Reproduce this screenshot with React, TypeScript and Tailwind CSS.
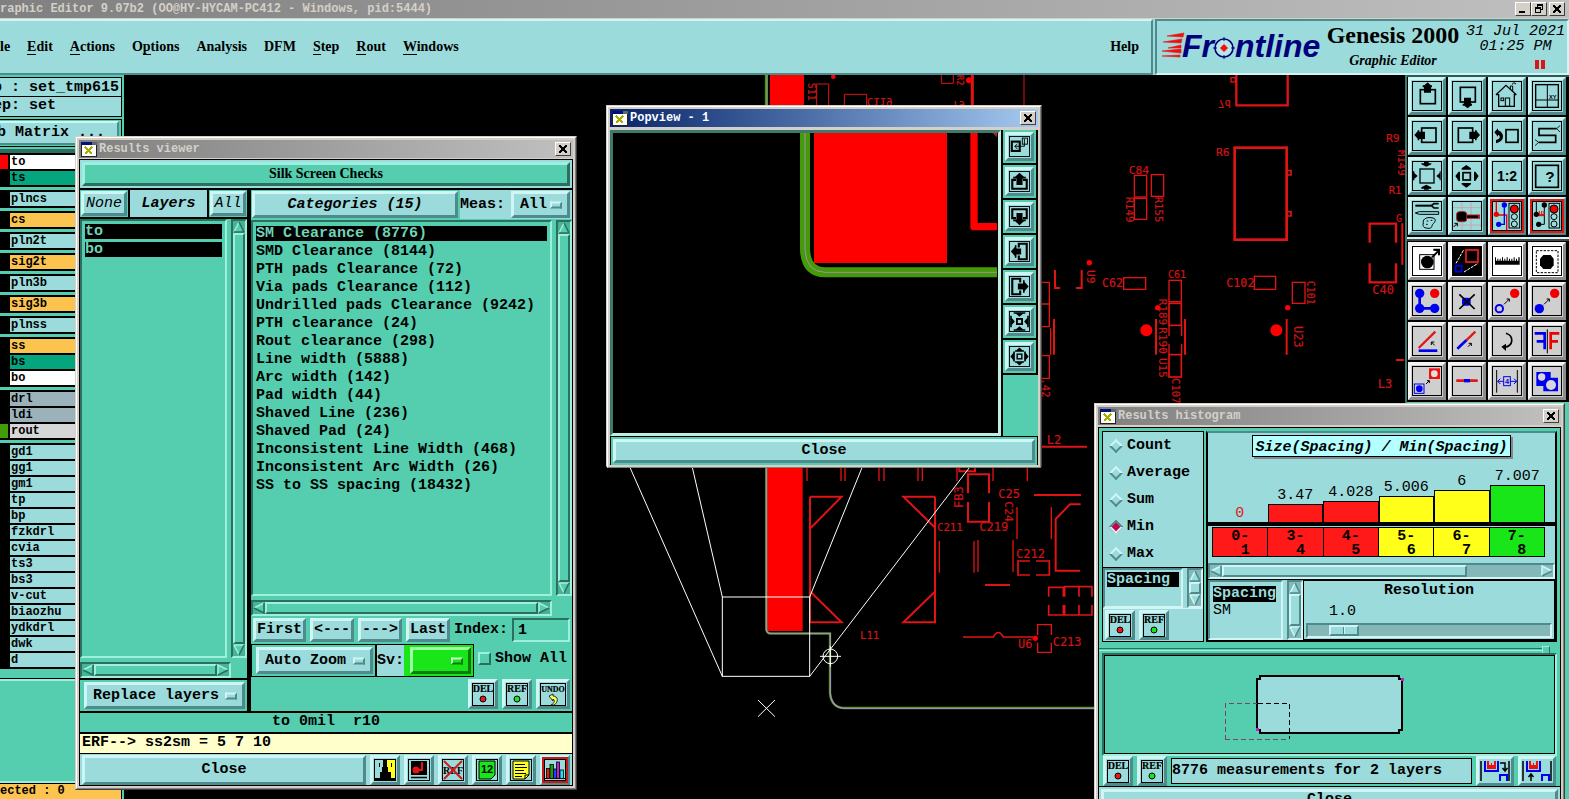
import React from "react";

/* ---------- shared class strings ---------- */
const mono = "font-['Liberation_Mono',monospace]";
const serif = "font-['Liberation_Serif',serif]";
const text15 = `${mono} text-[15px] leading-[18px] text-black`;
const raised = "border-t-[#cff6f4] border-l-[#cff6f4] border-b-[#4f8a8c] border-r-[#4f8a8c]";
const raisedTeal = "border-t-[#9cf0dc] border-l-[#9cf0dc] border-b-[#2b705f] border-r-[#2b705f]";
const sunkenTeal = "border-t-[#2b705f] border-l-[#2b705f] border-b-[#9cf0dc] border-r-[#9cf0dc]";
const sunken = "border-t-[#4f8a8c] border-l-[#4f8a8c] border-b-[#cff6f4] border-r-[#cff6f4]";
const cyan = "bg-[#9bdbdb]";
const teal = "bg-[#54ceae]";

/* ---------- small widgets ---------- */
function WinButton({ kind }: { kind: "min" | "restore" | "close" }) {
  return (
    <button
      type="button"
      aria-label={kind}
      className="flex h-[14px] w-4 shrink-0 items-center justify-center border border-t-white border-l-white border-r-[#404040] border-b-[#404040] bg-[#d4d0c8]"
    >
      <svg width="10" height="10" viewBox="0 0 10 10" fill="none" stroke="#000" shapeRendering="crispEdges">
        {kind === "close" && <path d="M1 1.5L8 8.5M2 1.5L9 8.5M8 1.5L1 8.5M9 1.5L2 8.5" strokeWidth="1" />}
        {kind === "min" && <path d="M1 8h6" strokeWidth="2" />}
        {kind === "restore" && <path d="M3.5 4V1M3 1h6M8.5 1v5M9 5.5H7M1.5 4v5M1 8.5h6M6.5 9V4M1 4h6" strokeWidth="1.4" />}
      </svg>
    </button>
  );
}

function TitleBar({ title, active = false }: { title: string; active?: boolean }) {
  return (
    <div
      className={`flex h-[18px] items-center gap-0.5 pl-0.5 pr-0.5 ${
        active ? "bg-linear-to-r from-[#0a246a] to-[#a6caf0] text-white" : "bg-linear-to-r from-[#808080] to-[#c0c0c0] text-[#d4d0c8]"
      }`}
    >
      <svg width="16" height="15" viewBox="0 0 16 15" shapeRendering="crispEdges">
        <rect width="16" height="15" fill="#222" />
        <rect x="0" y="0" width="11" height="3" fill="#001080" />
        <rect x="11" y="0" width="5" height="3" fill="#666" />
        <rect x="1" y="3" width="14" height="11" fill="#fff" />
        <path d="M4 5l7 7" stroke="#b0a800" strokeWidth="2.5" />
        <path d="M11 5l-7 7" stroke="#a0b000" strokeWidth="1.5" />
      </svg>
      <span className={`${mono} flex-1 text-xs leading-4 font-bold`}>{title}</span>
      <WinButton kind="close" />
    </div>
  );
}

function Frame({ className, children }: { className: string; children: React.ReactNode }) {
  return (
    <section className={`absolute flex flex-col border border-t-[#d4d0c8] border-l-[#d4d0c8] border-b-[#404040] border-r-[#404040] ${className}`}>
      <div className="flex flex-1 flex-col border border-t-white border-l-white border-b-[#808080] border-r-[#808080] bg-[#d4d0c8] p-0.5">{children}</div>
    </section>
  );
}

type Dir = "up" | "down" | "left" | "right";
const triPath: Record<Dir, string[]> = {
  up: ["M6 1L1 11", "M6 1L11 11M1 11H11"],
  down: ["M1 1H11M1 1L6 11", "M11 1L6 11"],
  left: ["M11 1L1 6", "M1 6L11 11V1"],
  right: ["M1 11V1L11 6", "M11 6L1 11"],
};
const triFill: Record<Dir, string> = {
  up: "M6 1L1 11H11Z",
  down: "M1 1H11L6 11Z",
  left: "M11 1L1 6L11 11Z",
  right: "M1 1L11 6L1 11Z",
};
function Tri({ dir, pale }: { dir: Dir; pale: boolean }) {
  const [lt, dk] = triPath[dir];
  return (
    <svg width="12" height="12" viewBox="0 0 12 12" className="shrink-0" fill="none">
      <path d={triFill[dir]} fill={pale ? "#9bdbdb" : "#54ceae"} />
      <path d={lt} stroke={pale ? "#cff6f4" : "#9cf0dc"} strokeWidth="1.6" />
      <path d={dk} stroke={pale ? "#4f8a8c" : "#2b705f"} strokeWidth="1.6" />
    </svg>
  );
}

function ScrollBar({ vertical = false, pale = false, className = "", fill = true }: { vertical?: boolean; pale?: boolean; className?: string; fill?: boolean }) {
  return (
    <div
      className={`flex items-center border-2 ${pale ? `${sunken} bg-[#84b8b8]` : `${sunkenTeal} bg-[#48b294]`} ${
        vertical ? "w-4 flex-col" : "h-4"
      } ${className}`}
    >
      <Tri dir={vertical ? "up" : "left"} pale={pale} />
      <div
        className={`${pale ? `${raised} ${cyan}` : `${raisedTeal} ${teal}`} border-2 ${vertical ? "w-full" : "h-full"} ${fill ? "flex-1" : "mr-auto w-[245px]"}`}
      />
      <Tri dir={vertical ? "down" : "right"} pale={pale} />
    </div>
  );
}

function Drop({ label, value, className, green = false }: { label: string; value: string; className: string; green?: boolean }) {
  return (
    <div className={`relative ${className}`}>
      <select
        aria-label={label}
        className={`${text15} h-full w-full appearance-none border-[3px] pl-1.5 font-bold ${
          green ? "border-t-[#a0ffa0] border-l-[#a0ffa0] border-b-[#0f7a0f] border-r-[#0f7a0f] bg-[#19e619]" : `${raised} ${cyan}`
        }`}
      >
        <option>{value}</option>
      </select>
      <span
        className={`pointer-events-none absolute top-1/2 right-2 h-[7px] w-3 -translate-y-1/2 border-2 ${
          green ? "border-t-[#c0ffc0] border-l-[#c0ffc0] border-b-[#0f7a0f] border-r-[#0f7a0f]" : raised
        }`}
      />
    </div>
  );
}

function TextButton({ children, className = "" }: { children: React.ReactNode; className?: string }) {
  return (
    <button type="button" className={`${text15} flex items-center justify-center border-[3px] font-bold ${raised} ${cyan} ${className}`}>
      {children}
    </button>
  );
}

/* word-over-dot glyphs used for delete / reference / undo */
function WordIcon({ word }: { word: "DEL" | "REF" | "UNDO" }) {
  const w = word === "UNDO" ? 26 : 22;
  return (
    <svg width={w} height="23" viewBox={`0 0 ${w} 23`} className="shrink-0">
      <rect x=".5" y=".5" width={w - 1} height="22" fill="none" stroke="#000" />
      <text x={w / 2} y="9" textAnchor="middle" fontSize={word === "UNDO" ? 8 : 10} fontFamily="Liberation Serif, serif" stroke="#000" strokeWidth=".2">
        {word}
      </text>
      {word === "UNDO" ? (
        <path d="M9 13l4-2v2c5 0 6 6 1 9h-3c4-2 4-5 2-6v2z" fill="#ffff60" stroke="#000" strokeWidth=".8" />
      ) : (
        <circle cx={w / 2} cy="16" r="3" fill={word === "DEL" ? "#e81818" : "#19e619"} stroke="#000" />
      )}
    </svg>
  );
}
function IconButton({ label, children, className = "" }: { label: string; children: React.ReactNode; className?: string }) {
  return (
    <button type="button" aria-label={label} className={`flex h-[30px] items-center justify-center overflow-hidden border-[3px] ${raised} ${cyan} ${className}`}>
      {children}
    </button>
  );
}

/* ---------- tool palette icons, drawn on a 90-unit grid ---------- */
const K = "#000";
const B = "#0000f0";
const R = "#f00000";
const A = {
  up: "M47 4L56 13H60V19H57V35H36V19H32V13H37Z",
  down: "M47 82L56 74H60V68H57V50H36V68H32V74H37Z",
  left: "M7 42L17 31V28H22V32H39V54H22V58H17V53Z",
  right: "M84 42L74 31V28H69V32H52V54H69V58H74V53Z",
};
const smallArrow = "M36 55L52 39M52 39h-8M52 39v8";

const views: { name: string; art: React.ReactNode }[] = [
  { name: "Pan up", art: <><rect x="25" y="26" width="45" height="42" fill="none" stroke={K} strokeWidth="5" /><path d={A.up} /></> },
  { name: "Pan down", art: <><rect x="25" y="19" width="45" height="44" fill="none" stroke={K} strokeWidth="5" /><path d={A.down} /></> },
  { name: "Home", art: <g fill="none" stroke={K} strokeWidth="3"><path d="M12 41L42 13L73 41M12 41H20V76H67V41H73" strokeWidth="4" /><rect x="40" y="51" width="13" height="25" /><rect x="27" y="51" width="8" height="8" /><path d="M55 24V15H62V30M60 10L66 5L72 9" /></g> },
  { name: "Coordinates", art: <g fill="none" stroke={K}><rect x="11" y="11" width="68" height="68" strokeWidth="4" /><path d="M46 10V80M10 57H80" strokeWidth="3" /><text x="51" y="53" fontSize="17" fontWeight="700" fontFamily="Liberation Sans, sans-serif" fill={K} stroke="none">XY</text></g> },
  { name: "Pan left", art: <><rect x="29" y="21" width="43" height="43" fill="none" stroke={K} strokeWidth="5" /><path d={A.left} /></> },
  { name: "Pan right", art: <><rect x="19" y="21" width="43" height="43" fill="none" stroke={K} strokeWidth="5" /><path d={A.right} /></> },
  { name: "Previous view", art: <><rect x="42" y="26" width="36" height="38" fill="none" stroke={K} strokeWidth="5" /><path d="M7 34L18 22V28C38 34 40 62 12 67V57C26 54 26 44 18 41V47Z" /></> },
  { name: "Serpentine", art: <g fill="none" stroke={K} strokeWidth="5"><path d="M74 23H21V43H71V64H20" /><path d="M74 23L84 14M74 23L84 33M20 64L9 56M20 64L9 74" strokeWidth="2.5" /></g> },
  { name: "Zoom in", art: <><rect x="24" y="24" width="42" height="42" fill="none" stroke={K} strokeWidth="4" /><path d="M28 7H36V3H50V7H58V10L43 17L28 10ZM28 83H36V86H50V83H58V79L43 71L28 79ZM3 31V58H7V53L17 45L7 36V31ZM86 31V58H83V53L73 45L83 36V31Z" /></> },
  { name: "Zoom out", art: <><rect x="33" y="35" width="22" height="22" fill="none" stroke={K} strokeWidth="5" /><path d="M43 12L57 22V26H29V22ZM43 80L57 70V66H29V70ZM10 45L20 32H24V60H20ZM80 45L70 32H66V60H70Z" /></> },
  { name: "Scale", art: <text x="45" y="59" textAnchor="middle" fontSize="42" fontWeight="700" fontFamily="Liberation Sans, sans-serif">1:2</text> },
  { name: "Help", art: <><rect x="11" y="13" width="68" height="66" fill="none" stroke={K} strokeWidth="5" /><text x="54" y="64" textAnchor="middle" fontSize="46" fontWeight="700" fontFamily="Liberation Sans, sans-serif">?</text></> },
  { name: "Setup", art: <g fill="none" stroke={K} strokeWidth="3"><path d="M10 14H58" strokeWidth="6" /><path d="M80 8H66L58 14L66 21H80" strokeWidth="5" /><path d="M10 36L22 32H80V40H22Z" /><path d="M34 66C30 52 50 46 66 52C74 56 68 64 62 70C58 76 62 80 52 82C38 82 30 78 34 66Z" /><path d="M44 60h5M56 58h5M42 70h5" /></g> },
  { name: "Select feature", art: <g><path d="M30 3V87M57 3V87M3 20H87M3 72H87" stroke="#c8a8a8" strokeWidth="3" /><path d="M30 47H84" stroke="#b02020" strokeWidth="13" /><path d="M30 47H78" stroke={K} strokeWidth="7" /><rect x="14" y="32" width="30" height="30" rx="8" fill={K} stroke="#b02020" strokeWidth="3" /><path d="M5 78L16 67M16 67h-9M16 67v9" stroke={K} strokeWidth="3" fill="none" /></g> },
  { name: "Net view on", art: <g fill="none" strokeWidth="4"><path d="M13 3V42H44V87" stroke={R} /><path d="M37 14V70H20" stroke={B} /><circle cx="37" cy="12" r="8" fill={B} /><circle cx="20" cy="70" r="8" fill={B} /><circle cx="13" cy="40" r="8" fill={R} /><rect x="51" y="7" width="32" height="74" stroke={K} strokeWidth="3" /><circle cx="67" cy="24" r="12" fill={R} stroke={K} strokeWidth="3" /><circle cx="67" cy="47" r="9" stroke={K} strokeWidth="3" /><circle cx="67" cy="69" r="9" stroke={K} strokeWidth="3" /></g> },
  { name: "Net view off", art: <g fill="none" strokeWidth="4"><path d="M13 3V42H37M37 14V70H20" stroke={K} strokeWidth="3" /><path d="M20 42H38M22 30V46M29 30V46M36 30V46" stroke={R} strokeWidth="3" /><circle cx="37" cy="12" r="8" fill={K} /><circle cx="20" cy="70" r="8" fill={K} /><circle cx="13" cy="40" r="8" fill={K} /><rect x="51" y="7" width="32" height="74" stroke={K} strokeWidth="3" /><circle cx="66" cy="24" r="12" fill={R} stroke={K} strokeWidth="3" /><circle cx="66" cy="47" r="9" stroke={K} strokeWidth="3" /><circle cx="66" cy="69" r="9" stroke={K} strokeWidth="3" /></g> },
];

const edits: { name: string; tone: string; art: React.ReactNode }[] = [
  { name: "Select", tone: "white", art: <g><rect x="23" y="26" width="43" height="44" fill="none" stroke={K} strokeWidth="3" /><circle cx="46" cy="48" r="19" /><path d="M60 34L78 16" stroke={K} strokeWidth="6" /><path d="M64 8H84V28H78V16L64 14Z" /></g> },
  { name: "Area", tone: "white", art: <g fill="none"><rect width="90" height="90" fill={K} /><rect x="42" y="12" width="36" height="36" stroke="#d01818" strokeWidth="6" /><rect x="11" y="59" width="18" height="18" stroke={B} strokeWidth="5" /><path d="M12 52L36 10M36 78L78 52" stroke="#fff" strokeWidth="3" strokeDasharray="9 3" /></g> },
  { name: "Measure", tone: "white", art: <path d="M9 56V34H12V44H16V38H19V44H23V38H26V44H30V34H33V44H37V38H40V44H44V34H47V44H51V38H54V44H58V38H61V44H65V34H68V44H72V38H75V44H79V34H83V56Z" /> },
  { name: "Window select", tone: "white", art: <g><rect x="13" y="14" width="65" height="66" fill="none" stroke={K} strokeWidth="3" strokeDasharray="7 4" /><path d="M34 27H56L65 38V58L56 69H34L24 58V38Z" /></g> },
  { name: "Connect", tone: "gray", art: <g><path d="M23 22V67H68" fill="none" stroke={B} strokeWidth="8" /><circle cx="23" cy="22" r="14" fill={B} /><circle cx="23" cy="67" r="14" fill={B} /><circle cx="68" cy="67" r="14" fill={B} /><circle cx="68" cy="22" r="14" fill={R} /></g> },
  { name: "Delete", tone: "gray", art: <g><rect x="30" y="35" width="26" height="24" rx="8" fill={B} /><path d="M22 25L68 69M68 25L22 69" stroke={K} strokeWidth="5" /></g> },
  { name: "Copy", tone: "gray", art: <g fill="none"><circle cx="22" cy="68" r="11" stroke={B} strokeWidth="6" /><circle cx="68" cy="22" r="14" fill={R} /><path d={smallArrow} stroke={K} strokeWidth="3" /></g> },
  { name: "Move", tone: "gray", art: <g fill="none"><circle cx="22" cy="68" r="14" fill={B} /><circle cx="68" cy="22" r="14" fill={R} /><path d={smallArrow} stroke={K} strokeWidth="3" /></g> },
  { name: "Rotate line", tone: "gray", art: <g fill="none"><path d="M20 66L70 17" stroke="#e01818" strokeWidth="7" /><path d="M20 74H76" stroke={B} strokeWidth="8" /><path d="M68 58L58 48M58 48h9M58 48v9" stroke={K} strokeWidth="3" /></g> },
  { name: "Stretch line", tone: "gray", art: <g fill="none"><path d="M42 44L70 17" stroke="#e01818" strokeWidth="7" /><path d="M16 68L43 43" stroke={B} strokeWidth="8" /><path d="M48 62L58 52M58 52h-8M58 52v8" stroke={K} strokeWidth="3" /></g> },
  { name: "Rotate", tone: "gray", art: <g fill="none"><path d="M42 22C66 30 66 60 36 64" stroke={K} strokeWidth="5" /><path d="M28 62L42 53V75Z" fill={K} /></g> },
  { name: "Mirror", tone: "gray", art: <g fill="none" strokeWidth="7"><path d="M8 22H38V70M38 46H14" stroke={B} strokeWidth="8" /><path d="M82 22H56V70M56 46H78" stroke={R} strokeWidth="8" /><path d="M46 10V82" stroke={K} strokeWidth="3" /></g> },
  { name: "Substitute", tone: "gray", art: <g fill="none"><rect x="7" y="54" width="29" height="28" stroke={B} strokeWidth="3" /><circle cx="22" cy="68" r="10" fill={B} /><rect x="51" y="7" width="33" height="32" fill="#f01010" /><circle cx="67" cy="23" r="10" fill="#e0e0e0" /><path d="M42 54L52 44M52 44h-7M52 44v7" stroke={K} strokeWidth="3" /></g> },
  { name: "Break line", tone: "gray", art: <g><path d="M16 44H74" stroke="#e01818" strokeWidth="8" strokeLinecap="round" /><path d="M36 44H54" stroke={B} strokeWidth="10" /></g> },
  { name: "Spacing", tone: "gray", art: <g fill="none" stroke={B} strokeWidth="3"><path d="M14 12V80M76 12V80" stroke={K} /><rect x="35" y="32" width="20" height="27" /><path d="M17 46H34M17 46l8-8M17 46l8 8M56 46H74M74 46l-8-8M74 46l-8 8" /><text x="45" y="54" textAnchor="middle" fontSize="22" fontWeight="700" fontFamily="Liberation Sans, sans-serif" fill={B} stroke="none">4</text></g> },
  { name: "Surface", tone: "gray", art: <g><path d="M13 18H56V35H78V76H34V60H13Z" fill={B} /><circle cx="29" cy="33" r="11" fill="#d8d8d8" /><circle cx="57" cy="57" r="15" fill="#d8d8d8" /></g> },
];

function ToolArt({ children }: { children: React.ReactNode }) {
  return (
    <svg width="30" height="30" viewBox="0 0 90 90">
      {children}
      <rect x="1.5" y="1.5" width="87" height="87" fill="none" stroke="#000" strokeWidth="3" />
    </svg>
  );
}

function Palette() {
  return (
    <aside className="relative z-0 flex w-[164px] shrink-0 flex-col border-l-2 border-l-[#3c7a70] bg-[#54ceae]">
      <div className="grid grid-cols-[repeat(4,38px)] gap-0.5 border-t-2 border-b-2 border-t-[#2b5a55] border-b-[#cff6f4] bg-black pb-0.5 pl-px">
        {views.map((v, i) => (
          <button
            key={v.name}
            type="button"
            aria-label={v.name}
            className={`flex h-[38px] w-[38px] items-center justify-center border-[3px] ${cyan} ${raised} ${i > 13 ? "outline-2 -outline-offset-4 outline-[#e01818]" : ""}`}
          >
            <ToolArt>{v.art}</ToolArt>
          </button>
        ))}
      </div>
      <div className="grid grid-cols-[repeat(4,38px)] gap-0.5 border-t-2 border-t-[#444] bg-black pt-px pb-0.5 pl-px">
        {edits.map((v) => (
          <button
            key={v.name}
            type="button"
            aria-label={v.name}
            className={`flex h-[38px] w-[38px] items-center justify-center border-[3px] border-t-[#f4f4f4] border-l-[#f4f4f4] border-b-[#8c8c8c] border-r-[#8c8c8c] ${
              v.tone === "white" ? "bg-white" : "bg-[#cfcfcf]"
            }`}
          >
            <ToolArt>{v.art}</ToolArt>
          </button>
        ))}
      </div>
    </aside>
  );
}

/* ---------- header ---------- */
const menus: [string, string, string][] = [
  ["", "", "le"],
  ["", "E", "dit"],
  ["", "A", "ctions"],
  ["O", "p", "tions"],
  ["", "", "Analysis"],
  ["", "", "DFM"],
  ["", "S", "tep"],
  ["", "R", "out"],
  ["", "W", "indows"],
];

function Header() {
  return (
    <header className="relative">
      <div className="flex h-[18px] items-center bg-linear-to-r from-[#808080] to-[#c0c0c0] pr-1 text-[#d4d0c8]">
        <span className={`${mono} flex-1 overflow-hidden text-xs leading-4 font-bold whitespace-nowrap`}>
          raphic Editor 9.07b2 (OO@HY-HYCAM-PC412 - Windows, pid:5444)
        </span>
        <WinButton kind="min" />
        <WinButton kind="restore" />
        <span className="w-0.5" />
        <WinButton kind="close" />
      </div>
      <div className="h-px bg-[#d4d0c8]" />
      <div className={`flex h-14 ${cyan}`}>
        <nav className={`${serif} flex flex-1 items-center gap-[17px] border-t-2 border-r-2 border-b-2 border-t-[#cff6f4] border-r-[#4f8a8c] border-b-[#4f8a8c] pr-3 text-sm leading-4 font-bold text-black`}>
          {menus.map(([a, u, b]) => (
            <button key={a + u + b} type="button">
              {a}
              <span className={u ? "border-b border-black" : ""}>{u}</span>
              {b}
            </button>
          ))}
          <button type="button" className="ml-auto">Help</button>
        </nav>
        <div className="ml-0.5 flex w-[414px] border-2 border-t-[#4f8a8c] border-l-[#4f8a8c] border-r-[#cff6f4] border-b-[#cff6f4]">
          <svg width="165" height="50" viewBox="1157 22 165 50" role="img" aria-label="Frontline" className="shrink-0">
            <path d="M1184 34L1167 37L1183 38ZM1182 40L1163 43L1181 44ZM1181 46L1168 49L1181 49ZM1181 50L1162 52L1181 54ZM1180 56L1162 57L1180 58Z" fill="#f01010" stroke="#f01010" strokeWidth=".6" />
            <g fill="#00007c" fontFamily="Liberation Sans, sans-serif" fontSize="32" fontWeight="700" fontStyle="italic">
              <text x="1182" y="58">Fr</text>
              <text x="1235" y="58">ntline</text>
            </g>
            <circle cx="1224" cy="49" r="9" fill="#b8e6e6" stroke="#00007c" strokeWidth="1.6" />
            <path d="M1224 45L1228 49L1224 53L1220 49Z" fill="#f01010" />
            <path d="M1224 38V42M1224 56V60M1213 49H1217M1231 49H1235" stroke="#00007c" />
          </svg>
          <div className={`${serif} flex w-[142px] shrink-0 flex-col items-center text-black`}>
            <span className="text-2xl leading-7 font-bold whitespace-nowrap">Genesis 2000</span>
            <span className="mt-1 text-sm leading-4 font-bold italic">Graphic Editor</span>
          </div>
          <div className={`${mono} flex flex-1 flex-col text-center text-[15px] leading-[15px] text-black italic`}>
            <span className="mt-[3px] whitespace-nowrap">31 Jul 2021</span>
            <span>01:25 PM</span>
            <span className="mt-1.5 mr-[22px] flex justify-center gap-0.5 self-end">
              <i className="h-[9px] w-1 bg-[#d81818]" />
              <i className="h-[9px] w-1 bg-[#d81818]" />
            </span>
          </div>
        </div>
      </div>
    </header>
  );
}

/* ---------- layer list ---------- */
type Layer = [string, string, string?];
const W = "bg-white";
const G = "bg-[#05a57e]";
const O = "bg-[#fcc44f]";
const C = "bg-[#9bdbdb]";
const S = "bg-[#9bb2bb]";
const groups: Layer[][] = [
  [["to", W, "bg-[#ff0000]"], ["ts", G]],
  [["plncs", C]],
  [["cs", O]],
  [["pln2t", C]],
  [["sig2t", O]],
  [["pln3b", C]],
  [["sig3b", O]],
  [["plnss", C]],
  [["ss", O], ["bs", G], ["bo", W]],
  [["drl", S], ["ldi", S], ["rout", "bg-[#d6d6d6]", "bg-[#449b08]"]],
  ["gd1", "gg1", "gm1", "tp", "bp", "fzkdrl", "cvia", "ts3", "bs3", "v-cut", "biaozhu", "ydkdrl", "dwk", "d"].map((n) => [n, C] as Layer),
];

function LayerPanel() {
  return (
    <aside className={`relative z-0 flex w-[124px] shrink-0 flex-col overflow-hidden ${teal} pt-0.5 pr-0.5 ${text15} font-bold`}>
      <div className={`h-5 border-y border-r border-black -indent-[7px] leading-[19px] whitespace-nowrap ${cyan}`}>b : set_tmp615</div>
      <div className={`h-5 border-b border-r border-black -indent-[7px] ${cyan}`}>ep: set</div>
      <div className="mt-0.5 border-y border-r border-black pr-0.5 py-px">
        <button type="button" className={`h-6 w-full border-y-2 border-r-2 text-left -indent-[3px] font-bold ${raised} ${cyan}`}>b Matrix ...</button>
      </div>
      <div className="mt-0.5 h-1 bg-[#2b705f]" />
      <div className="flex flex-col gap-[3px]">
        {groups.map((g) => (
          <ul key={g[0][0]} className="bg-black pt-0.5">
            {g.map(([name, bg, chip]) => (
              <li key={name} className="mb-0.5 flex h-[14px] gap-0.5">
                <span className={`w-2 ${chip ?? "bg-black"}`} />
                <button type="button" className={`flex-1 pl-px text-left text-xs leading-[14px] font-bold ${bg}`}>{name}</button>
              </li>
            ))}
          </ul>
        ))}
      </div>
      <div className="mt-[9px] h-[106px] border-y border-black">
        <div className="h-full border-y-2 border-t-[#9cf0dc] border-b-[#9cf0dc]" />
      </div>
      <div className="flex-1 border-r border-black bg-[#fcc44f] text-xs leading-[15px]">ected : 0</div>
    </aside>
  );
}

/* ---------- board artwork ---------- */
function Lbl({ x, y, r = 0, s = 27, flip = false, children }: { x: number; y: number; r?: number; s?: number; flip?: boolean; children: string }) {
  return (
    <text
      transform={`translate(${x} ${y}) rotate(${r})${flip ? " scale(1 -1)" : ""}`}
      fontSize={s}
      fontFamily="DejaVu Sans Mono, monospace"
      fill="#d01414"
      stroke="#d01414"
      strokeWidth=".6"
    >
      {children}
    </text>
  );
}

function Board() {
  return (
    <svg className="absolute inset-0 h-full w-full" aria-label="Board layout">
      <g transform="translate(600 70) scale(.33333)" fill="none" stroke="#e01414" strokeWidth="4">
        <path d="M499 10V120" stroke="#449b08" strokeWidth="9" />
        <path d="M501 10V120" stroke="#a78ab0" strokeWidth="3" />
        <rect x="510" y="10" width="102" height="120" fill="#ff0000" stroke="none" />
        <path d="M650 110V42H686V110M733 110V73H800V110M1024 15V40H1060V15M1272 15V110" strokeWidth="3" />
        <path d="M1117 15V110" strokeWidth="9" />
        <circle cx="1107" cy="31" r="9" fill="#ff0000" stroke="none" />
        <circle cx="700" cy="20" r="7" fill="#ff0000" stroke="none" />
        <Lbl x={800} y={84} s={32} flip>C119</Lbl>
        <Lbl x={624} y={38} r={90} s={30}>S11</Lbl>
        <Lbl x={1070} y={15} r={90} s={26}>R2</Lbl>
        <Lbl x={1056} y={92} s={32} flip>T9</Lbl>
      </g>
      <g transform="translate(1030 70) scale(.33333)" fill="none" stroke="#e01414" strokeWidth="4">
        <path d="M619 15V106H773V15" strokeWidth="7" />
        <rect x="603" y="23" width="13" height="13" />
        <rect x="614" y="233" width="156" height="276" strokeWidth="8" />
        <path d="M772 302H783V315H772M772 425H783V438H772" strokeWidth="5" />
        <rect x="313" y="316" width="37" height="65" /><rect x="364" y="314" width="37" height="65" /><rect x="313" y="385" width="37" height="63" />
        <path d="M75 600V654H90M155 600V654H138" strokeWidth="6" />
        <rect x="281" y="623" width="66" height="35" /><rect x="673" y="619" width="64" height="39" /><rect x="787" y="637" width="38" height="63" />
        <rect x="417" y="631" width="37" height="64" /><rect x="417" y="700" width="37" height="66" strokeWidth="5" />
        <path d="M417 766V798M417 822V854M455 766V798M455 822V854" /><rect x="417" y="854" width="37" height="67" strokeWidth="5" />
        <path d="M378 747V854M465 747V854M770 747V854M72 747V854" strokeWidth="6" />
        <path d="M30 637H58V702H30M58 702V770H30M62 775V855M30 857H58V925H30" />
        <circle cx="178" cy="578" r="8" fill="#ff0000" stroke="none" /><circle cx="383" cy="713" r="8" fill="#ff0000" stroke="none" /><circle cx="773" cy="713" r="8" fill="#ff0000" stroke="none" />
        <circle cx="349" cy="781" r="18" fill="#ff0000" stroke="none" /><circle cx="739" cy="781" r="18" fill="#ff0000" stroke="none" />
        <path d="M1019 518V461H1098V518M1019 580V637H1098V580" strokeWidth="7" />
        <path d="M1117 460V584M1098 870H1122" strokeWidth="6" />
        <Lbl x={564} y={91} s={32} flip>7d</Lbl>
        <Lbl x={558} y={257} s={34}>R6</Lbl><Lbl x={296} y={312} s={34}>C84</Lbl>
        <Lbl x={288} y={380} r={90} s={32}>R149</Lbl><Lbl x={376} y={380} r={90} s={32}>R155</Lbl>
        <Lbl x={216} y={652} s={35}>C62</Lbl><Lbl x={414} y={625} s={30}>C61</Lbl><Lbl x={589} y={651} s={35}>C102</Lbl>
        <Lbl x={832} y={632} r={90} s={30}>C101</Lbl><Lbl x={172} y={600} r={90} s={34}>U9</Lbl>
        <Lbl x={388} y={686} r={90} s={33}>R189</Lbl><Lbl x={388} y={772} r={90} s={33}>R190</Lbl><Lbl x={388} y={864} r={90} s={33}>U15</Lbl>
        <Lbl x={427} y={924} r={90} s={32}>C107</Lbl><Lbl x={792} y={768} r={90} s={36}>U23</Lbl>
        <Lbl x={1068} y={215} s={34}>R9</Lbl><Lbl x={1104} y={240} r={90} s={32}>M149</Lbl><Lbl x={1076} y={373} s={32}>R1</Lbl>
        <Lbl x={1098} y={455} s={30}>G</Lbl><Lbl x={1027} y={673} s={36}>C40</Lbl><Lbl x={1043} y={953} s={36}>L3</Lbl>
        <Lbl x={36} y={925} r={90} s={32}>.42</Lbl>
      </g>
      <g transform="translate(600 300) scale(.33333)" fill="none" stroke="#e01414" strokeWidth="4">
        <rect x="501" y="490" width="107" height="503" fill="#ff0000" stroke="none" />
        <path d="M499 490V990Q502 1000 512 1000H690V1180Q694 1224 735 1224H1500" stroke="#449b08" strokeWidth="7" />
        <path d="M499 490V990Q502 1001 512 1001H691V1180Q695 1224 735 1225H1500" stroke="#a78ac0" strokeWidth="4" />
        <path d="M630 590H725L632 684M630 590V967H725L632 876M1005 590H910L1004 682M1005 590V967H910L1004 876" strokeWidth="6" />
        <path d="M621 490V543M723 490V543M735 490V543M837 490V543M852 490V543M954 490V543M967 490V543M1071 490V543M1179 490V543M1282 490V543" />
        <path d="M1104 580V523H1167V580M1104 606V665H1167V606M1078 505V514H1125V505" strokeWidth="6" />
        <path d="M1302 585H1443M1155 855H1230M1325 440H1461M1442 613H1410L1367 657V812H1440" strokeWidth="6" />
        <path d="M1251 621V717M1354 621V717M1239 720V816M1122 723V818M1134 720V816M1018 723V818" />
        <path d="M1290 783H1254V825H1290M1308 783H1348V825H1308M1346 890V862H1390V890M1346 915V945H1390V915M1394 890V860H1437V890M1394 915V945H1437V915M1437 860H1476V890M1437 945H1476V915" strokeWidth="5" />
        <path d="M1089 1011H1180Q1195 984 1210 1011H1300" strokeWidth="5" />
        <path d="M1313 1005V974H1354V1005M1313 1028V1057H1354V1028" />
        <circle cx="1306" cy="1015" r="8" fill="#ff0000" stroke="none" />
        <Lbl x={1340} y={433} s={36}>L2</Lbl><Lbl x={1089} y={624} r={-90} s={36}>FB3</Lbl><Lbl x={1195} y={595} s={36}>C25</Lbl>
        <Lbl x={1216} y={604} r={90} s={34}>C24</Lbl><Lbl x={1011} y={693} s={32}>C211</Lbl><Lbl x={1138} y={693} s={36}>C219</Lbl>
        <Lbl x={1248} y={773} s={36}>C212</Lbl><Lbl x={780} y={1016} s={32}>L11</Lbl><Lbl x={1254} y={1045} s={36}>U6</Lbl><Lbl x={1358} y={1039} s={36}>C213</Lbl>
        <g stroke="#fff" strokeWidth="3">
          <rect x="367" y="891" width="262" height="238" />
          <path d="M88 498L367 1129M276 498L367 891M788 498L629 891M1112 498L629 1129" />
          <circle cx="691" cy="1069" r="22" />
          <path d="M660 1069H723M691 1038V1100M474 1200L525 1250M525 1200L474 1250" />
        </g>
      </g>
    </svg>
  );
}

/* ---------- results viewer ---------- */
const categories = [
  "SM Clearance (8776)", "SMD Clearance (8144)", "PTH pads Clearance (72)", "Via pads Clearance (112)",
  "Undrilled pads Clearance (9242)", "PTH clearance (24)", "Rout clearance (298)", "Line width (5888)",
  "Arc width (142)", "Pad width (44)", "Shaved Line (236)", "Shaved Pad (24)",
  "Inconsistent Line Width (468)", "Inconsistent Arc Width (26)", "SS to SS spacing (18432)",
];

const footIcons: { name: string; art: React.ReactNode }[] = [
  { name: "Toggle", art: <><path d="M11 0H22V22H11Z" fill="#ffff20" /><path d="M0 22V19H6V13H8V8H9V1H13V8H14V13H17V19H22V22Z" /><path d="M5.500 4v4M17.500 4v4" stroke="#000" /></> },
  { name: "Snapshot", art: <><rect x="3" y="2" width="16" height="14" /><path d="M14 3V11H8" fill="none" stroke="#e81010" strokeWidth="2" /><circle cx="8" cy="11" r="3.5" fill="#e81010" /><path d="M3 18.5H19" stroke="#000" strokeWidth="1.500" /></> },
  { name: "Clear references", art: <><text x="11" y="15" textAnchor="middle" fontSize="10" fontFamily="Liberation Serif, serif">REF</text><path d="M2 2L20 20M20 2L2 20" stroke="#d01818" strokeWidth="2" /></> },
  { name: "Numbers", art: <><path d="M3 2H19V16L15 20H3Z" fill="#19e619" stroke="#000" /><text x="11" y="14" textAnchor="middle" fontSize="11" fontWeight="700" fontFamily="Liberation Sans, sans-serif">12</text></> },
  { name: "Notes", art: <><path d="M3 2H19V16L15 20H3Z" fill="#ffff20" stroke="#000" /><path d="M5 5.5H15M5 8.5H17M5 11.5H14M5 14.5H16M5 17.5H12M15 20V16H19" fill="none" stroke="#000" /></> },
  { name: "Histogram", art: <><path d="M1 19.5H21" stroke="#000" /><g stroke="#000" strokeWidth=".8"><rect x="2.5" y="9.500" width="3.500" height="10" fill="#e81818" /><rect x="6" y="5.500" width="3.500" height="14" fill="#10a010" /><rect x="9.500" y="10" width="3" height="9.500" fill="#2040ff" /><rect x="12.500" y="3" width="3" height="16.500" fill="#c020d0" /><rect x="16" y="11" width="3.500" height="8.500" fill="#20e0f0" /></g></> },
];

function ResultsViewer() {
  return (
    <Frame className="top-[136px] left-[75px] h-[654px] w-[502px]">
      <TitleBar title="Results viewer" />
      <div className={`${text15} mt-px flex flex-1 flex-col border border-black bg-black font-bold`}>
        <div className={`${cyan} mb-0.5 p-0.5`}>
          <h2 className={`${serif} h-6 border-[3px] text-center text-sm leading-[17px] font-bold ${raisedTeal} ${teal}`}>Silk Screen Checks</h2>
        </div>
        <div className="flex h-[521px] gap-1">
          <div className="flex w-[167px] shrink-0 flex-col gap-0.5">
            <div className="flex h-[27px] gap-0.5">
              <div className={`${teal} p-px`}><button type="button" className={`h-full w-[46px] border-[3px] font-normal italic ${raised} ${cyan}`}>None</button></div>
              <div className={`${cyan} flex flex-1 items-center justify-center text-[15px] italic`}>Layers</div>
              <div className={`${teal} p-px`}><button type="button" className={`h-full w-[36px] border-[3px] font-normal italic ${raised} ${cyan}`}>All</button></div>
            </div>
            <div className={`${teal} flex flex-1 flex-col gap-1`}>
              <div className="flex flex-1 gap-1">
                <ul className={`flex flex-1 flex-col gap-[3px] border-2 p-[3px] ${sunkenTeal}`}>
                  <li className="h-[15px] bg-black leading-[15px] text-[#6fd4b8]">to</li>
                  <li className="h-[15px] bg-black leading-[15px] text-[#6fd4b8]">bo</li>
                </ul>
                <ScrollBar vertical />
              </div>
              <ScrollBar className="mr-4" />
            </div>
            <div className={`${teal} h-[31px] py-0.5 pr-0.5 pl-1`}>
              <Drop label="Layer mode" value="Replace layers" className="h-full w-full" />
            </div>
          </div>
          <div className={`${teal} flex min-w-0 flex-1 flex-col`}>
            <div className="flex h-[29px]">
              <button type="button" className={`my-px ml-px w-[206px] border-[3px] font-bold italic ${raised} ${cyan}`}>Categories (15)</button>
              <div className={`${cyan} ml-0.5 flex flex-1 items-center justify-between py-px pr-0.5`}>
                <span>Meas:</span>
                <Drop label="Measurements" value="All" className="h-full w-[59px]" />
              </div>
            </div>
            <div className="mt-px flex flex-1 gap-1">
              <ul className={`flex min-w-0 flex-1 flex-col gap-[3px] border-2 px-[3px] py-1 whitespace-pre ${sunkenTeal}`}>
                {categories.map((c, i) => (
                  <li key={c} className={`h-[15px] leading-[15px] ${i === 0 ? "bg-black text-[#6fd4b8]" : ""}`}>{c}</li>
                ))}
              </ul>
              <ScrollBar vertical />
            </div>
            <ScrollBar className="mt-1 mr-5" />
            <div className="mt-0.5 flex h-6 items-center gap-1 px-0.5">
              <TextButton className="h-full w-[53px] shrink-0">First</TextButton>
              <TextButton className="h-full w-11 shrink-0">&lt;---</TextButton>
              <TextButton className="h-full w-11 shrink-0">---&gt;</TextButton>
              <TextButton className="h-full w-11 shrink-0">Last</TextButton>
              <label htmlFor="index">Index:</label>
              <input id="index" defaultValue="1" className={`h-full w-[58px] min-w-0 flex-1 border-2 pl-1 font-bold ${sunkenTeal} ${teal}`} />
            </div>
            <div className="mt-0.5 flex h-[33px] items-center">
              <div className="flex h-full border border-black">
                <Drop label="Zoom mode" value="Auto Zoom" className="my-0.5 ml-1 w-[117px]" />
                <div className={`ml-0.5 flex items-center border-l-2 border-black ${cyan}`}>Sv:</div>
                <div className="bg-[#19e619] p-0.5 pl-1.5">
                  <Drop label="Severity" value="" green className="h-full w-[61px]" />
                </div>
              </div>
              <label className="mb-1 ml-1 flex items-center gap-1 whitespace-nowrap">
                <input type="checkbox" className={`h-[13px] w-[13px] appearance-none border-2 ${raisedTeal}`} />
                Show All
              </label>
            </div>
            <div className="flex h-[34px] items-center justify-end gap-1 pr-0.5">
              <IconButton label="Delete" className="w-[30px]"><WordIcon word="DEL" /></IconButton>
              <IconButton label="Reference" className="w-[30px]"><WordIcon word="REF" /></IconButton>
              <IconButton label="Undo" className="w-[34px]"><WordIcon word="UNDO" /></IconButton>
            </div>
          </div>
        </div>
        <div className={`${teal} mt-0.5 h-[19px] text-center whitespace-pre`}>to 0mil  r10</div>
        <div className="mt-0.5 h-[19px] bg-[#ffffcc] pl-0.5">ERF--&gt; ss2sm = 5 7 10</div>
        <div className={`${cyan} mt-px flex flex-1 items-center gap-1 px-0.5`}>
          <TextButton className="h-[30px] flex-1">Close</TextButton>
          {footIcons.map((f, i) => (
            <IconButton key={f.name} label={f.name} className={`w-[30px] ${i === 5 ? "outline-2 -outline-offset-4 outline-[#c81818]" : ""}`}>
              <svg width="22" height="22" viewBox="0 0 22 22">
                {f.art}
                <rect x=".5" y=".5" width="21" height="21" fill="none" stroke="#000" />
              </svg>
            </IconButton>
          ))}
        </div>
      </div>
    </Frame>
  );
}

/* ---------- popview ---------- */
const popIcons: { name: string; art: React.ReactNode }[] = [
  { name: "Zoom window", art: <g fill="none" stroke={K}><rect x="12" y="24" width="34" height="40" strokeWidth="9" /><rect x="57" y="9" width="22" height="26" strokeWidth="4" /><path d="M66 12V44H25M36 34L25 44L36 56" strokeWidth="4" /></g> },
  { name: "Pan up", art: <><path d="M30 38H14V76H76V38H60" fill="none" stroke={K} strokeWidth="9" /><path d="M45 8L64 25H72V32H58V60H32V32H18V25H26Z" /></> },
  { name: "Pan down", art: <><path d="M30 52H14V14H76V52H60" fill="none" stroke={K} strokeWidth="9" /><path d="M45 82L64 65H72V58H58V30H32V58H18V65H26Z" /></> },
  { name: "Pan left", art: <><path d="M42 28V12H76V78H42V62" fill="none" stroke={K} strokeWidth="9" /><path d="M8 45L25 26V18H32V32H52V58H32V72H25V64Z" /></> },
  { name: "Pan right", art: <><path d="M48 28V12H14V78H48V62" fill="none" stroke={K} strokeWidth="9" /><path d="M84 45L67 26V18H60V32H38V58H60V72H67V64Z" /></> },
  { name: "Zoom in", art: <><rect x="34" y="34" width="22" height="22" fill="none" stroke={K} strokeWidth="8" /><path d="M20 5H70V12H60L45 25L30 12H20ZM20 85H70V78H60L45 65L30 78H20ZM5 20V70H12V60L25 45L12 30V20ZM85 20V70H78V60L65 45L78 30V20Z" /></> },
  { name: "Zoom out", art: <><rect x="35" y="35" width="20" height="20" fill="none" stroke={K} strokeWidth="6" /><path d="M45 6L58 18H64V25H26V18H32ZM45 84L58 72H64V65H26V72H32ZM6 45L18 30V24H25V66H18V60ZM84 45L72 30V24H65V66H72V60Z" /></> },
];

function Popview() {
  return (
    <Frame className="top-[105px] left-[606px] h-[362px] w-[436px]">
      <TitleBar title="Popview - 1" active />
      <div className="mt-[3px] flex flex-1 flex-col bg-black">
        <div className="flex flex-1 gap-0.5">
          <div className="flex-1 border-[3px] border-t-[#3c7a70] border-l-[#3c7a70] border-r-[#bfeee4] border-b-[#bfeee4]">
            <svg className="h-full w-full" viewBox="39 185 1155 900" preserveAspectRatio="xMinYMin slice" aria-label="Magnified view" fill="none">
              <path d="M615 185V535Q618 602 675 603H1191" stroke="#449b08" strokeWidth="30" />
              <path d="M615 185V535Q618 602 675 603H1191" stroke="#a78ab0" strokeWidth="3" />
              <rect x="642" y="185" width="399" height="390" fill="#ff0000" />
              <path d="M1122 185V466H1191" stroke="#ff0000" strokeWidth="22" strokeLinejoin="round" />
              <path d="M1178 185H1191V198Z" fill="#d01414" />
            </svg>
          </div>
          <div className="flex w-[35px] flex-col gap-0.5">
            {popIcons.map((p) => (
              <div key={p.name} className={`${teal} mr-0.5 p-0.5`}>
                <button type="button" aria-label={p.name} className={`flex h-[29px] w-full items-center justify-center border-[3px] ${raised} ${cyan}`}>
                  <svg width="21" height="21" viewBox="0 0 90 90">
                    {p.art}
                    <rect x="2" y="2" width="86" height="86" fill="none" stroke="#000" strokeWidth="4" />
                  </svg>
                </button>
              </div>
            ))}
            <div className={`${teal} flex-1`} />
          </div>
        </div>
        <div className={`${teal} mx-px mt-px p-0.5`}>
          <TextButton className="h-6 w-full">Close</TextButton>
        </div>
      </div>
    </Frame>
  );
}

/* ---------- histogram ---------- */
const bars = [
  { value: "0", h: 0, from: "0-", to: "1", fill: "bg-[#ff1919]", tone: "text-[#e01818]" },
  { value: "3.47", h: 18, from: "3-", to: "4", fill: "bg-[#ff1919]", tone: "text-black" },
  { value: "4.028", h: 21, from: "4-", to: "5", fill: "bg-[#ff1919]", tone: "text-black" },
  { value: "5.006", h: 26, from: "5-", to: "6", fill: "bg-[#ffff19]", tone: "text-black" },
  { value: "6", h: 32, from: "6-", to: "7", fill: "bg-[#ffff19]", tone: "text-black" },
  { value: "7.007", h: 37, from: "7-", to: "8", fill: "bg-[#19e619]", tone: "text-black" },
];

function Histogram() {
  return (
    <Frame className="top-[403px] left-[1094px] h-[420px] w-[471px]">
      <TitleBar title="Results histogram" />
      <div className={`${text15} mt-0.5 flex flex-1 flex-col border border-black ${teal} font-bold`}>
        <div className="flex h-[214px] shrink-0 gap-0.5 px-[3px] pt-[3px]">
          <div className={`flex w-[102px] flex-col border border-black ${cyan}`}>
            <fieldset className="flex flex-col border-b border-black">
              {["Count", "Average", "Sum", "Min", "Max"].map((r) => (
                <label key={r} className="flex h-[27px] items-center gap-1.5 pl-2">
                  <input
                    type="radio"
                    name="stat"
                    defaultChecked={r === "Min"}
                    className="h-[10px] w-[10px] rotate-45 appearance-none border-2 border-t-[#cff6f4] border-l-[#cff6f4] border-b-[#4f8a8c] border-r-[#4f8a8c] checked:border-t-[#4f8a8c] checked:border-l-[#4f8a8c] checked:border-r-[#cff6f4] checked:border-b-[#cff6f4] checked:bg-[#c8004c]"
                  />
                  {r}
                </label>
              ))}
            </fieldset>
            <div className="flex h-10 gap-1">
              <ul className={`min-w-0 flex-1 border-2 p-0.5 ${sunken}`}>
                <li className="h-[15px] bg-black leading-[15px] text-[#9bdbdb]">Spacing</li>
              </ul>
              <ScrollBar vertical pale />
            </div>
            <div className="flex flex-1 items-center gap-1 border-t border-[#cff6f4] pl-0.5">
              <IconButton label="Delete" className="w-[30px]"><WordIcon word="DEL" /></IconButton>
              <IconButton label="Reference" className="w-[30px]"><WordIcon word="REF" /></IconButton>
            </div>
          </div>
          <div className={`flex flex-1 flex-col border-2 border-t-[#4f8a8c] border-l-black border-b-black border-r-black ${cyan}`}>
            <div className="flex h-[93px] shrink-0 flex-col items-center border-b-4 border-black pt-0.5">
              <div className="h-[22px] w-[259px] shrink-0 border border-black bg-[#b4ffff] text-center leading-6 whitespace-nowrap italic shadow-[2px_2px_0_#808890]">
                Size(Spacing) / Min(Spacing)
              </div>
              <div className="flex w-full flex-1 items-end pr-[10px] pl-1">
                {bars.map((b) => (
                  <div key={b.value} className={`flex-1 text-center font-normal ${b.tone}`}>
                    <div className="leading-4">{b.value}</div>
                    <div className={b.h ? `border border-b-0 border-black ${b.fill}` : ""} style={{ height: b.h }} />
                  </div>
                ))}
              </div>
            </div>
            <div className="mt-px mr-[10px] mb-1.5 ml-1 flex h-[30px] shrink-0 border-l border-black">
              {bars.map((b) => (
                <div key={b.value} className={`flex-1 border border-l-0 border-black pt-0.5 text-center leading-[14px] ${b.fill}`}>
                  <div>{b.from}</div>
                  <div className="pl-2.5">{b.to}</div>
                </div>
              ))}
            </div>
            <ScrollBar pale fill={false} className="shrink-0" />
            <div className="flex flex-1 border-t border-black">
              <ul className={`w-[75px] border-2 py-1 pl-[3px] ${sunken}`}>
                <li className="h-4 w-[63px] bg-black leading-4 text-[#9bdbdb]">Spacing</li>
                <li className="font-normal">SM</li>
              </ul>
              <ScrollBar vertical pale className="ml-1" />
              <div className="flex flex-1 flex-col border border-black px-0.5 pb-px">
                <label htmlFor="res" className="text-center leading-5">Resolution</label>
                <span className="mt-0.5 pl-[23px] font-normal">1.0</span>
                <input
                  id="res"
                  type="range"
                  min="0"
                  max="10"
                  defaultValue="1"
                  className={`mt-auto h-[15px] w-full appearance-none border-2 bg-[#84b8b8] ${sunken} [&::-webkit-slider-thumb]:h-[11px] [&::-webkit-slider-thumb]:w-[30px] [&::-webkit-slider-thumb]:appearance-none [&::-webkit-slider-thumb]:border-2 [&::-webkit-slider-thumb]:border-t-[#cff6f4] [&::-webkit-slider-thumb]:border-l-[#cff6f4] [&::-webkit-slider-thumb]:border-b-[#4f8a8c] [&::-webkit-slider-thumb]:border-r-[#4f8a8c] [&::-webkit-slider-thumb]:bg-[linear-gradient(90deg,#9bdbdb_12px,#4f8a8c_12px,#4f8a8c_13px,#cff6f4_13px,#cff6f4_14px,#9bdbdb_14px)]`}
                />
              </div>
            </div>
          </div>
        </div>
        <div className="flex h-[11px] items-center pt-1">
          <div className="h-[3px] flex-1 border-t border-b border-t-[#2b705f] border-b-[#9cf0dc]" />
          <span className={`mr-2.5 h-2 w-2 border ${raisedTeal} ${teal}`} />
        </div>
        <div className="mx-[3px] h-[103px] border-2 border-t-[#2b705f] border-l-[#2b705f] border-b-[#9cf0dc] border-r-[#9cf0dc]">
          <svg className="h-full w-full border border-black" viewBox="1105 655 448 97" aria-label="Overview" fill="none" shapeRendering="crispEdges">
            <path d="M1259 675H1398V678H1401V729H1398V732H1259V729H1256V678H1259Z" fill="#9bdbdb" stroke="#000" strokeWidth="2" />
            <path d="M1224.500 738.500V702.500H1256M1224.500 738.500H1288.500" stroke="#80406c" strokeDasharray="5 3" />
            <path d="M1257 702.500H1288.500V738" stroke="#000" strokeDasharray="5 3" />
            <path d="M1400 677h3v3h-3zM1255 727h3v3h-3z" fill="#c020c8" />
          </svg>
        </div>
        <div className="flex h-[30px] items-center gap-1 px-1">
          <IconButton label="Delete" className="h-[26px] w-[30px]"><WordIcon word="DEL" /></IconButton>
          <IconButton label="Reference" className="h-[26px] w-[30px]"><WordIcon word="REF" /></IconButton>
          <div className={`h-[26px] flex-1 border border-black leading-6 whitespace-nowrap ${cyan}`}>8776 measurements for 2 layers</div>
          {[0, 1].map((n) => (
            <IconButton key={n} label={n ? "Copy up" : "Copy down"} className="h-[26px] w-[38px]">
              <svg width="30" height="20" viewBox="0 0 30 20" fill="none">
                <path d="M1 0V20M29 0V20" stroke="#000" strokeWidth="1.500" />
                <path d="M5 0V10H18V0" stroke={B} strokeWidth="2" />
                <path d="M7 0V8H16V0H14V4H12V2H11V4H9V0Z" fill="#f01010" />
                <path d="M20 20V14H27V20" stroke={B} strokeWidth="2" />
                {n ? <path d="M9 20V13M6.500 16L9 13L11.500 16" stroke="#000" strokeWidth="1.500" /> : <path d="M20 2H25V9M22.500 7L25 10L27.500 7" stroke="#000" strokeWidth="1.500" />}
              </svg>
            </IconButton>
          ))}
        </div>
        <div className={`${cyan} flex-1 border-t border-black p-0.5`}>
          <TextButton className="h-[22px] w-full">Close</TextButton>
        </div>
      </div>
    </Frame>
  );
}

export default function App() {
  return (
    <main className="relative flex h-screen flex-col overflow-hidden bg-black">
      <Board />
      <Header />
      <div className="flex flex-1 justify-between">
        <LayerPanel />
        <Palette />
      </div>
      <ResultsViewer />
      <Popview />
      <Histogram />
    </main>
  );
}
